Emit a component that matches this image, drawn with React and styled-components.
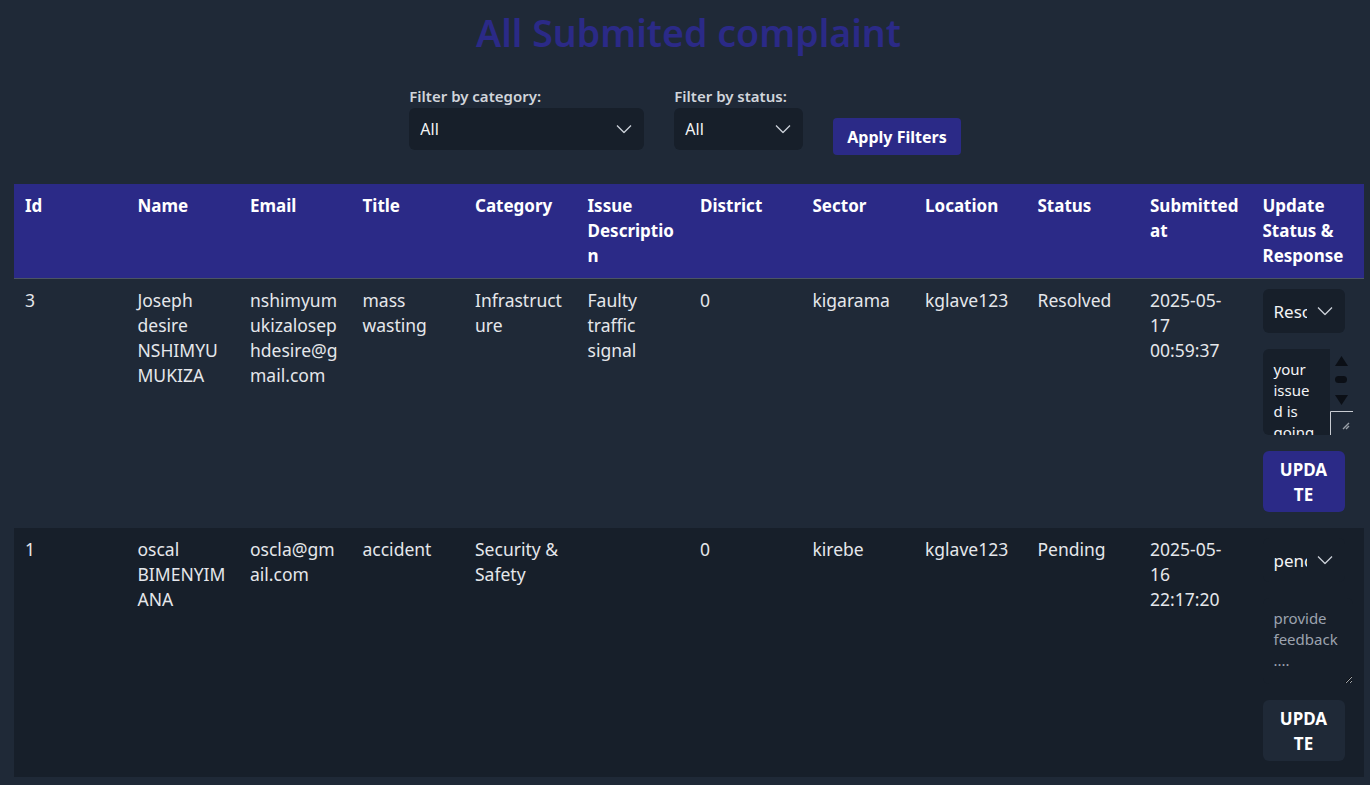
import styled, { createGlobalStyle } from 'styled-components'

const GlobalStyle = createGlobalStyle`
    html, body {
        margin: 0;
        padding: 0;
        background: #1f2937;
        font-family: "Noto Sans", "Open Sans", sans-serif;
        color: #e5e7eb;
    }
`;

const Page = styled.div`
    padding-bottom: 8px;
`;

const Title = styled.h1`
    margin: 0;
    padding: 8px 0 0 7px;
    height: 60px;
    text-align: center;
    font-size: 37.5px;
    font-weight: 600;
    line-height: 50px;
    color: #2b2a87;
`;

const Filters = styled.div`
    display: flex;
    justify-content: center;
    align-items: flex-end;
    gap: 30px;
    margin-top: 18px;
    margin-bottom: 34px;
`;

const FilterGroup = styled.div`
    display: flex;
    flex-direction: column;
`;

const Label = styled.label`
    margin-bottom: 2px;
    font-size: 15px;
    font-weight: 600;
    line-height: 20px;
    color: #d1d5db;
`;

const SelectWrap = styled.div`
    position: relative;
    width: ${p => p.$width}px;
`;

const Select = styled.select`
    appearance: none;
    width: 100%;
    height: ${p => p.$height || 42}px;
    padding: 0 38px 0 11px;
    border: none;
    border-radius: 6px;
    background: #171f2a;
    color: #f3f4f6;
    font-family: inherit;
    font-size: ${p => p.$size || 16}px;
    outline: none;
`;

const Chevron = styled.svg`
    position: absolute;
    right: 12px;
    top: 50%;
    transform: translateY(-50%);
    pointer-events: none;
`;

const ApplyButton = styled.button`
    height: 37px;
    margin-bottom: -5px;
    padding: 0 14px;
    border: none;
    border-radius: 4px;
    background: #2b2a87;
    color: #fff;
    font-family: inherit;
    font-size: 16px;
    font-weight: 700;
`;

const Table = styled.table`
    width: 1350px;
    margin-left: 14px;
    table-layout: fixed;
    border-collapse: collapse;
`;

const Th = styled.th`
    padding: 9px 11px 10px;
    background: #2b2a87;
    border-bottom: 1px solid #4b5563;
    text-align: left;
    vertical-align: top;
    font-size: 17px;
    font-weight: 700;
    line-height: 25px;
    color: #fff;
    overflow-wrap: anywhere;
`;

const Row = styled.tr`
    background: ${p => p.$alt ? '#171f2a' : '#1f2937'};
`;

const Td = styled.td`
    padding: 9px 11px 16px;
    vertical-align: top;
    font-size: 17.5px;
    line-height: 25px;
    color: #e5e7eb;
    overflow-wrap: anywhere;
`;

const Actions = styled.div`
    display: flex;
    flex-direction: column;
    gap: 16px;
    padding-top: 1px;
`;

const FeedbackBox = styled.div`
    display: flex;
    width: 90px;
    height: 86px;
`;

const Feedback = styled.textarea`
    box-sizing: border-box;
    flex: 1;
    min-width: 0;
    height: 100%;
    padding: 10px ${p => p.$scroll ? 12 : 11}px 10px 11px;
    border: none;
    border-radius: ${p => p.$scroll ? '6px 0 0 6px' : '6px'};
    background: #171f2a;
    color: #f3f4f6;
    font-family: inherit;
    font-size: 15px;
    line-height: 21px;
    outline: none;
    overflow: hidden;
    overflow-wrap: anywhere;
    resize: ${p => p.$scroll ? 'none' : 'both'};
    &::placeholder {
        color: #9ca3af;
    }
`;

const ScrollBar = styled.svg`
    flex: none;
    display: block;
`;

const UpdateButton = styled.button`
    width: 82px;
    height: 61px;
    padding: 5px 16px;
    border: none;
    border-radius: 6px;
    background: ${p => p.$muted ? '#1f2937' : '#2b2a87'};
    color: #fff;
    font-family: inherit;
    font-size: 17px;
    font-weight: 700;
    line-height: 25px;
    word-break: break-all;
`;

function ChevronIcon() {
    return (
        <Chevron width="16" height="9" viewBox="0 0 16 9" fill="none">
            <path d="M1 1 L8 8 L15 1" stroke="#cbd0d8" strokeWidth="1.3" />
        </Chevron>
    )
}

// native-looking scrollbar drawn beside an overflowing textarea
function ScrollGutter() {
    return (
        <ScrollBar width="23" height="86" viewBox="0 0 23 86">
            <path d="M5 17 L11.5 7 L18 17 Z" fill="#0b0f16" />
            <rect x="5" y="27" width="12" height="7" rx="3.5" fill="#0b0f16" />
            <path d="M5 46 L18 46 L11.5 56 Z" fill="#0b0f16" />
            <path d="M0.5 86 L0.5 62.5 L23 62.5" fill="none" stroke="#c8ccd2" strokeWidth="1" />
            <path d="M13 80 L19 74 M16 80 L19 77" stroke="#9aa0a8" strokeWidth="1.4" />
        </ScrollBar>
    )
}

const headers = ['Id', 'Name', 'Email', 'Title', 'Category', 'Issue Description', 'District', 'Sector', 'Location', 'Status', 'Submitted at', 'Update Status & Response']

const complaints = [
    {
        id: 3, name: 'Joseph desire NSHIMYUMUKIZA', email: 'nshimyumukizalosephdesire@gmail.com',
        title: 'mass wasting', category: 'Infrastructure', issue: 'Faulty traffic signal',
        district: 0, sector: 'kigarama', location: 'kglave123', status: 'Resolved',
        submitted: '2025-05-17 00:59:37', select: 'Resolved', response: 'your issued is going to be resolved soon',
    },
    {
        id: 1, name: 'oscal BIMENYIMANA', email: 'oscla@gmail.com',
        title: 'accident', category: 'Security & Safety', issue: '',
        district: 0, sector: 'kirebe', location: 'kglave123', status: 'Pending',
        submitted: '2025-05-16 22:17:20', select: 'pending', response: '',
    },
]

function App() {
    return (
        <Page>
            <GlobalStyle />
            <Title>All Submited complaint</Title>
            <Filters>
                <FilterGroup>
                    <Label>Filter by category:</Label>
                    <SelectWrap $width={235}>
                        <Select defaultValue="All"><option>All</option></Select>
                        <ChevronIcon />
                    </SelectWrap>
                </FilterGroup>
                <FilterGroup>
                    <Label>Filter by status:</Label>
                    <SelectWrap $width={129}>
                        <Select defaultValue="All"><option>All</option></Select>
                        <ChevronIcon />
                    </SelectWrap>
                </FilterGroup>
                <ApplyButton>Apply Filters</ApplyButton>
            </Filters>
            <Table>
                <thead>
                    <tr>
                        {headers.map(h => <Th key={h}>{h}</Th>)}
                    </tr>
                </thead>
                <tbody>
                    {complaints.map((c, i) => {
                        const scroll = c.response.length > 0
                        return (
                            <Row key={c.id} $alt={i % 2 === 1}>
                                <Td>{c.id}</Td>
                                <Td>{c.name}</Td>
                                <Td>{c.email}</Td>
                                <Td>{c.title}</Td>
                                <Td>{c.category}</Td>
                                <Td>{c.issue}</Td>
                                <Td>{c.district}</Td>
                                <Td>{c.sector}</Td>
                                <Td>{c.location}</Td>
                                <Td>{c.status}</Td>
                                <Td>{c.submitted}</Td>
                                <Td>
                                    <Actions>
                                        <SelectWrap $width={82}>
                                            <Select $height={44} $size={17} defaultValue={c.select}>
                                                <option value="pending">pending</option>
                                                <option value="Resolved">Resolved</option>
                                            </Select>
                                            <ChevronIcon />
                                        </SelectWrap>
                                        <FeedbackBox>
                                            <Feedback
                                                $scroll={scroll}
                                                defaultValue={c.response}
                                                placeholder="provide feedback ...."
                                            />
                                            {scroll && <ScrollGutter />}
                                        </FeedbackBox>
                                        <UpdateButton $muted={i % 2 === 1}>UPDATE</UpdateButton>
                                    </Actions>
                                </Td>
                            </Row>
                        )
                    })}
                </tbody>
            </Table>
        </Page>
    )
}

export default App
